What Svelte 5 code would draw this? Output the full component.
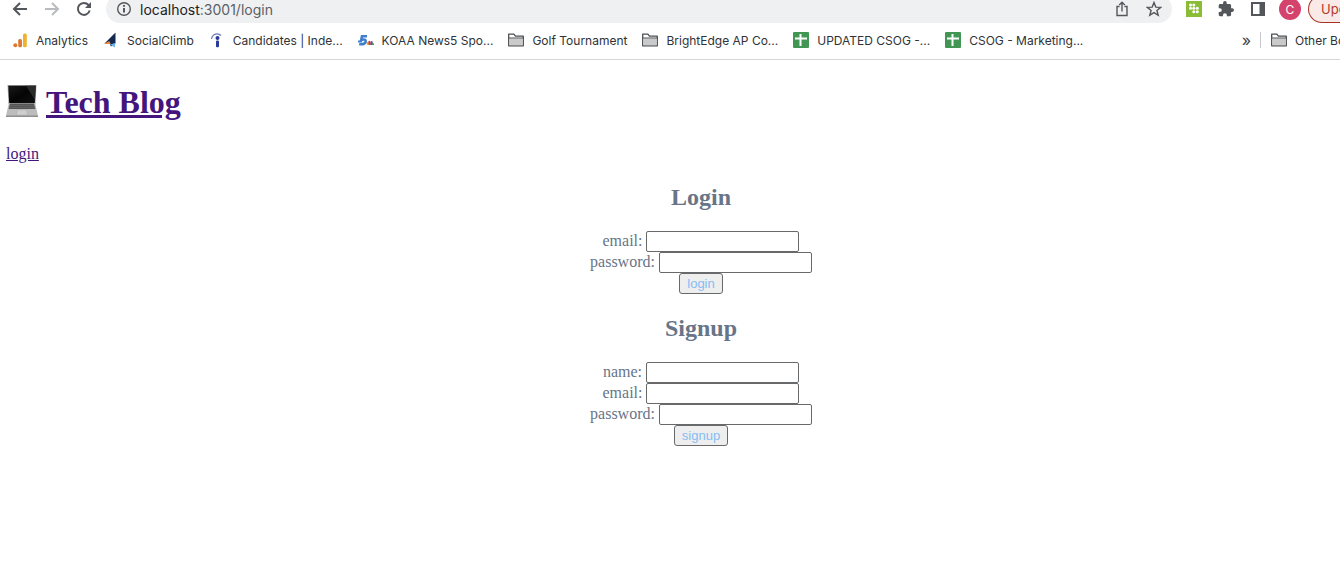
<script>
  const bookmarks = [
    { icon: 'analytics', text: 'Analytics' },
    { icon: 'climb', text: 'SocialClimb' },
    { icon: 'indeed', text: 'Candidates | Inde...' },
    { icon: 'news', text: 'KOAA News5 Spo...' },
    { icon: 'folder', text: 'Golf Tournament' },
    { icon: 'folder', text: 'BrightEdge AP Co...' },
    { icon: 'sheet', text: 'UPDATED CSOG -...' },
    { icon: 'sheet', text: 'CSOG - Marketing...' }
  ];
  const forms = [
    { id: 'login', title: 'Login', fields: ['email', 'password'] },
    { id: 'signup', title: 'Signup', fields: ['name', 'email', 'password'] }
  ];
</script>

{#snippet icon(name)}
  <svg width="16" height="16" viewBox="0 0 16 16" aria-hidden="true">
    {#if name === 'analytics'}
      <circle cx="3.300" cy="13.300" r="2" fill="#df7730" />
      <rect x="6.200" y="7" width="3.800" height="8.300" rx="1.500" fill="#dc7a32" />
      <rect x="11" y="1.500" width="3.800" height="13.800" rx="1.500" fill="#f0b030" />
    {:else if name === 'climb'}
      <path d="M12 1 1.500 11.500 7 11z" fill="#14294f" />
      <path d="M12.500.5 5.500 9.500 8 14.500 12.500 11.500z" fill="#14294f" />
      <path d="M1 11.800 6.200 9l1.600 3z" fill="#e98539" />
      <path d="M7 12.500 12 11v4.500z" fill="#69b3e8" />
    {:else if name === 'indeed'}
      <circle cx="8.500" cy="6" r="2" fill="#2a3b97" />
      <rect x="7" y="8.600" width="3" height="6.600" rx="1" fill="#2a3b97" />
      <path d="M2.500 7C3.500 1.500 9 .5 12 3.500" fill="none" stroke="#6a77bc" stroke-width="1.200" />
    {:else if name === 'news'}
      <path d="M9 4.200H4L3.200 8q5-1.600 4.500 1.700Q6.500 13 1.200 12" fill="none" stroke="#3f7fcb" stroke-width="2.600" />
      <path d="M0 9.500h4" stroke="#3f7fcb" stroke-width="2" />
      <path d="M9.500 13c-1.800-1.500-.5-3.500 1-3l1 3z" fill="#e8a52b" />
      <path d="M11 13c-1.800-4 .2-5 1.500-3.500l.5 3.500z" fill="#cf3e45" />
      <path d="M12.500 13c-.6-4 1.500-5 2.400-3L14 13z" fill="#714b9b" />
      <path d="M13.500 13c0-3 2.500-3 2.500 0z" fill="#3d9b59" />
    {:else if name === 'folder'}
      <path d="M.7 13.800V2.200h5.200l1.500 2h7.900v9.600z" fill="#fff" stroke="#4c4f52" stroke-width="1.300" stroke-linejoin="round" />
      <path d="M1.300 6.500h13.400v6.700H1.300z" fill="#cacaca" />
      <path d="M1 6h14" stroke="#4c4f52" />
    {:else}
      <rect width="16" height="16" rx="1" fill="#429654" />
      <path d="M2 6.500h12M7.500 2v12" stroke="#fff" stroke-width="2" />
    {/if}
  </svg>
{/snippet}

<header>
  <div class="toolbar">
    <div class="nav">
      <button aria-label="Back"><svg width="16" height="16" viewBox="0 0 16 16"><path d="M15 8H2M8 2 2 8l6 6" /></svg></button>
      <button aria-label="Forward" class="off"><svg width="16" height="16" viewBox="0 0 16 16"><path d="M1 8h13M8 2l6 6-6 6" /></svg></button>
      <button aria-label="Reload"><svg width="16" height="16" viewBox="0 0 16 16"><path d="M13.7 9.5A6 6 0 1 1 12.5 4L14 5.5" /><path d="M15 1v6H9z" class="solid" /></svg></button>
    </div>
    <div class="address">
      <svg width="16" height="16" viewBox="0 0 16 16"><circle cx="8" cy="8" r="6.3" class="thin" /><path d="M8 7v4.5M8 4v1.7" /></svg>
      <span class="url">localhost<span>:3001/login</span></span>
      <button aria-label="Share"><svg width="16" height="16" viewBox="0 0 16 16"><path class="thin" d="M5.5 5.5H3v9h10v-9h-2.5M8 10.5V1.5M5.2 4 8 1.2 10.8 4" /></svg></button>
      <button aria-label="Bookmark this page"><svg width="16" height="16" viewBox="0 0 16 16"><path class="thin" d="m8 1.5 1.8 4.6 4.9.3-3.8 3.1 1.3 4.8L8 11.6l-4.2 2.7 1.3-4.8-3.8-3.1 4.9-.3z" /></svg></button>
    </div>
    <div class="extensions">
      <button aria-label="Extension"><svg width="16" height="16" viewBox="0 0 16 16"><rect width="16" height="16" fill="#8abd35" stroke="none" /><g fill="#fff" stroke="none"><circle cx="4.5" cy="4" r="1.5" /><circle cx="7.8" cy="4" r="1.5" /><circle cx="4.5" cy="7.3" r="1.5" /><circle cx="7.8" cy="7.3" r="1.5" /><circle cx="11.3" cy="7.3" r="1.5" /><circle cx="7.8" cy="10.8" r="1.5" /><circle cx="11.3" cy="10.8" r="1.5" /></g></svg></button>
      <button aria-label="Extensions"><svg width="16" height="16" viewBox="1 1 22 22"><path class="solid" d="M20.5 11H19V7c0-1.1-.9-2-2-2h-4V3.500a2.500 2.500 0 0 0-5 0V5H4c-1.100 0-2 .9-2 2v3.800h1.500a2.700 2.700 0 0 1 0 5.400H2V20c0 1.100.9 2 2 2h3.800v-1.500a2.700 2.700 0 0 1 5.400 0V22H17c1.100 0 2-.9 2-2v-4h1.500a2.500 2.500 0 0 0 0-5z" /></svg></button>
      <button aria-label="Side panel"><svg width="16" height="16" viewBox="0 0 16 16"><path d="M2 2h12v12H2z" /><path class="solid" d="M9.500 2h4.500v12H9.500z" /></svg></button>
      <button class="avatar" aria-label="Profile">C</button>
    </div>
    <button class="update">Update</button>
  </div>
  <nav class="bookmarks" aria-label="Bookmarks">
    {#each bookmarks as b}
      <a href="#top">{@render icon(b.icon)}<span>{b.text}</span></a>
    {/each}
    <button class="more" aria-label="More bookmarks">»</button>
    <a class="other" href="#top">{@render icon('folder')}<span>Other Bookmarks</span></a>
  </nav>
</header>

<main id="top">
  <h1>
    <svg width="32" height="34" viewBox="0 0 32 34" aria-hidden="true">
      <defs>
        <linearGradient id="shine" x2="1" y2="1"><stop offset="0" stop-color="#1a1a1a" /><stop offset=".5" stop-color="#050505" /><stop offset="1" stop-color="#111" /></linearGradient>
      </defs>
      <path d="M1.500 0h29l-1 19h-27z" fill="#a5a5a5" />
      <path d="M2.300.8h27.400L28.800 18H3.200z" fill="url(#shine)" />
      <path d="M20 .8h9.700L29 15z" fill="#2a2a2a" />
      <path d="M2.800 18h26.400L32 31H0z" fill="#bdbdbd" />
      <path d="M4 18.500h24l1.300 5.500H2.700z" fill="#555" />
      <path d="M3.500 20.500h25M3 22.500h26" stroke="#777" stroke-width=".5" />
      <path d="M11.500 25h9l.8 5h-10.600z" fill="#cfcfcf" stroke="#aaa" stroke-width=".4" />
      <path d="M0 30.500h32V32H0z" fill="#909090" />
    </svg>
    <a href="#top">Tech Blog</a>
  </h1>
  <a href="#login">login</a>
  <div class="forms">
    {#each forms as f}
      <form id={f.id}>
        <h2>{f.title}</h2>
        {#each f.fields as field}
          <div class="field">
            <label for="{f.id}-{field}">{field}:</label>
            <input id="{f.id}-{field}" type={field === 'password' ? 'password' : 'text'} />
          </div>
        {/each}
        <button type="button">{f.id}</button>
      </form>
    {/each}
  </div>
</main>

<style>
  :global(body) { margin: 0; background: #fff; overflow-x: hidden; }
  header { font-family: Inter, sans-serif; border-bottom: 1px solid #d5d6d8; overflow: hidden; color: #2f3236; }
  header button { border: 0; padding: 0; background: none; display: flex; flex: none; align-items: center; justify-content: center; }
  header svg { flex: none; display: block; }
  .toolbar { display: flex; align-items: center; height: 28px; margin-top: -5px; }
  .toolbar svg { fill: none; stroke: #53575c; stroke-width: 2; }
  .toolbar .thin { stroke-width: 1.4; }
  .toolbar .solid { fill: #53575c; stroke: none; }
  .toolbar .off svg { stroke: #b9bbbe; }
  .nav { display: flex; gap: 16px; padding: 0 14px 0 12px; }
  .address { flex: 1; height: 28px; border-radius: 14px; background: #eff0f2; display: flex; align-items: center; gap: 16px; padding: 0 10px; }
  .url { flex: 1; margin-left: -8px; font-size: 14px; color: #202124; }
  .url span { color: #5c6065; }
  .extensions { display: flex; align-items: center; gap: 16px; padding: 0 7px 0 14px; }
  .extensions .avatar { width: 22px; height: 22px; border-radius: 11px; background: #d3436c; color: #fff; font: 12px Inter, sans-serif; margin-left: -3px; }
  .toolbar .update { box-sizing: border-box; width: 32px; height: 28px; border: 1px solid #a83225; border-right: 0; border-radius: 14px 0 0 14px; background: #f9e9e7; color: #b13a2b; font: 13px Inter, sans-serif; justify-content: flex-start; padding-left: 12px; overflow: hidden; }
  .bookmarks { display: flex; align-items: center; gap: 15px; height: 34px; padding: 0 0 2px 12px; font-size: 12px; white-space: nowrap; }
  .bookmarks a { display: flex; align-items: center; gap: 8px; color: inherit; text-decoration: none; }
  .bookmarks .more { margin-left: auto; font: 16px Inter, sans-serif; color: #3c4043; }
  .bookmarks .other { box-sizing: border-box; width: 80px; height: 16px; margin-left: -6px; padding-left: 10px; border-left: 1px solid #c9cbce; overflow: hidden; }
  main { padding: 0 6px; font: 16px "Liberation Serif", serif; color: #687588; }
  main a { color: #44157c; }
  h1 { display: flex; gap: 8px; align-items: center; margin: 24px 0 25px; font-size: 32px; line-height: 36px; }
  .forms { padding-left: 56px; margin-right: -6px; text-align: center; }
  h2 { font-size: 24px; line-height: 28px; margin: 20px 0; }
  .field { height: 21px; line-height: 20px; display: flex; gap: 4px; justify-content: center; }
  input { box-sizing: border-box; width: 153px; height: 21px; border: 1px solid #68696b; border-radius: 2px; background: #fff; padding: 1px 2px; }
  form button { display: block; margin: 0 auto; height: 21px; border: 1px solid #68696b; border-radius: 3px; background: #eee; color: #85bdf5; font: 13px "Liberation Sans", sans-serif; padding: 0 7px; }
</style>
